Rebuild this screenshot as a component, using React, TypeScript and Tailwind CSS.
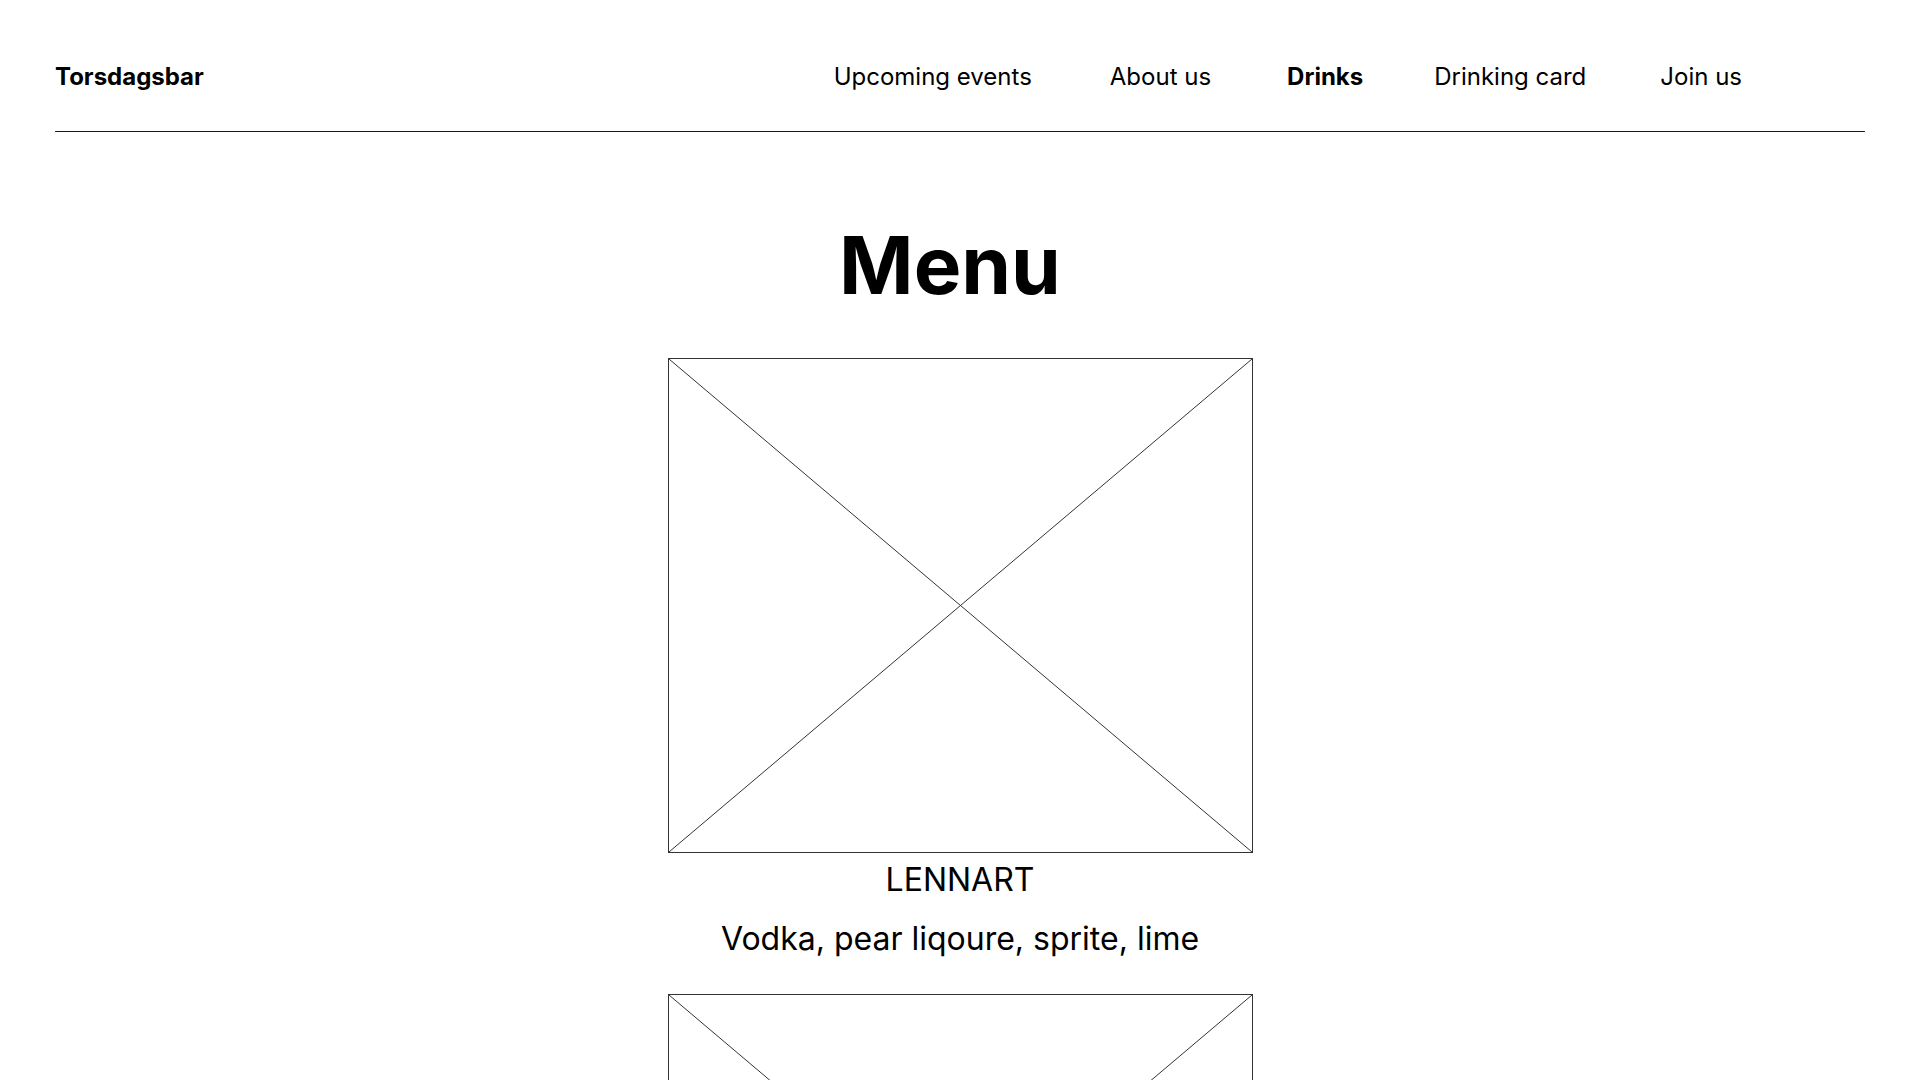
import React from "react";

const drinks = [
  { name: "LENNART", desc: "Vodka, pear liqoure, sprite, lime" },
  { name: "LENNART", desc: "Vodka, pear liqoure, sprite, lime" },
];

const nav = [
  { label: "Upcoming events", cls: "" },
  { label: "About us", cls: "ml-[78px]" },
  { label: "Drinks", cls: "ml-[76px] font-bold" },
  { label: "Drinking card", cls: "ml-[71px]" },
  { label: "Join us", cls: "ml-[74px]" },
];

function Placeholder() {
  return (
    <div className="relative w-[585px] h-[495px] border border-[#333]">
      <svg className="absolute inset-0 w-full h-full" viewBox="0 0 100 100" preserveAspectRatio="none">
        <line x1="0" y1="0" x2="100" y2="100" stroke="#333" strokeWidth="1" vectorEffect="non-scaling-stroke" />
        <line x1="100" y1="0" x2="0" y2="100" stroke="#333" strokeWidth="1" vectorEffect="non-scaling-stroke" />
      </svg>
    </div>
  );
}

export default function App() {
  return (
    <div className="min-h-screen bg-white text-black" style={{ fontFamily: "Inter, 'Noto Sans', sans-serif" }}>
      <header className="px-[55px]">
        <div className="flex items-center pt-[59px] pb-[36px] border-b border-[#1a1a1a]">
          <span className="text-[24px] font-bold">Torsdagsbar</span>
          <nav className="ml-auto mr-[123px] flex text-[24px]">
            {nav.map((n) => (
              <a key={n.label} className={n.cls}>
                {n.label}
              </a>
            ))}
          </nav>
        </div>
      </header>

      <main className="flex flex-col items-center">
        <h1 className="mt-[93px] pr-[20px] text-[80px] font-bold leading-none">Menu</h1>
        <div className="mt-[53px] flex flex-col items-center gap-[39px]">
          {drinks.map((d, i) => (
            <div key={i} className="flex flex-col items-center">
              <Placeholder />
              <p className="mt-[11px] text-[32px] leading-none">{d.name}</p>
              <p className="mt-[27px] text-[32px] leading-none">{d.desc}</p>
            </div>
          ))}
        </div>
      </main>
    </div>
  );
}
